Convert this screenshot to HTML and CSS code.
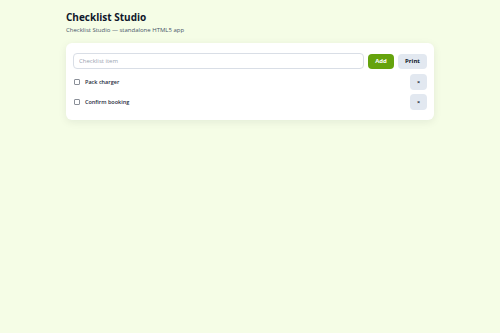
FILE: index.html
```html
<!DOCTYPE html>
<html lang="en">
<head>
  <meta charset="UTF-8">
  <meta name="viewport" content="width=device-width, initial-scale=1.0">
  <title>Checklist Studio</title>
  <link rel="stylesheet" href="styles.css">
</head>
<body>
  <div class="app">
    <h1>Checklist Studio</h1>
    <p class="subtitle">Checklist Studio — standalone HTML5 app</p>

    <!-- Checklist card -->
    <div class="card">
      <div class="add-row">
        <input type="text" class="item-input" placeholder="Checklist item">
        <button class="btn btn-add">Add</button>
        <button class="btn btn-plain">Print</button>
      </div>
      <ul class="items">
        <li class="item">
          <label><input type="checkbox"> <span>Pack charger</span></label>
          <button class="btn btn-plain btn-remove">×</button>
        </li>
        <li class="item">
          <label><input type="checkbox"> <span>Confirm booking</span></label>
          <button class="btn btn-plain btn-remove">×</button>
        </li>
      </ul>
    </div>
  </div>
</body>
</html>
```

FILE: styles.css
```css
/* Basic styling */
body, html {
  margin: 0;
  padding: 0;
  font-family: "Open Sans", "Noto Sans", sans-serif;
  background-color: #f5fde6;
  color: #0f172a;
}

.app {
  max-width: 368px;
  margin: 0 auto;
  padding: 10px 0;
}

h1 {
  margin: 0;
  font-size: 10px;
  font-weight: 700;
  line-height: 14px;
}
.subtitle {
  margin: 2px 0 8px;
  font-size: 6px;
  line-height: 9px;
  color: #475569;
}

/* Card */
.card {
  background: #fff;
  border-radius: 6px;
  box-shadow: 0 2px 8px rgba(15, 23, 42, 0.08);
  padding: 10px 7px 10px;
}
.add-row {
  display: flex;
  align-items: center;
  gap: 4px;
}
.item-input {
  flex: 1;
  height: 16px;
  box-sizing: border-box;
  border: 1px solid #d9dee6;
  border-radius: 4px;
  padding: 0 5px;
  font-family: inherit;
  font-size: 6px;
  outline: none;
}
.item-input::placeholder {
  color: #9aa3af;
}
.btn {
  border: none;
  border-radius: 4px;
  font-family: inherit;
  font-size: 6px;
  font-weight: 700;
  height: 15px;
  padding: 0;
  cursor: pointer;
}
.btn-add {
  width: 26px;
  background-color: #65a30d;
  color: #fff;
}
.btn-plain {
  width: 29px;
  background-color: #e2e8f0;
  color: #0f172a;
}

/* Items */
.items {
  list-style: none;
  margin: 5px 0 0;
  padding: 0;
  display: flex;
  flex-direction: column;
  gap: 4px;
}
.item {
  display: flex;
  align-items: center;
  justify-content: space-between;
}
.item label {
  display: flex;
  align-items: center;
  gap: 5px;
  font-size: 5.5px;
  font-weight: 600;
  color: #1e293b;
}
.item input {
  appearance: none;
  width: 6px;
  height: 6px;
  margin: 0 0 0 1px;
  border: 1px solid #8a8f98;
  border-radius: 1px;
  box-sizing: border-box;
  background: #fff;
}
.btn-remove {
  width: 17px;
  height: 16px;
  font-size: 5.5px;
}
```
